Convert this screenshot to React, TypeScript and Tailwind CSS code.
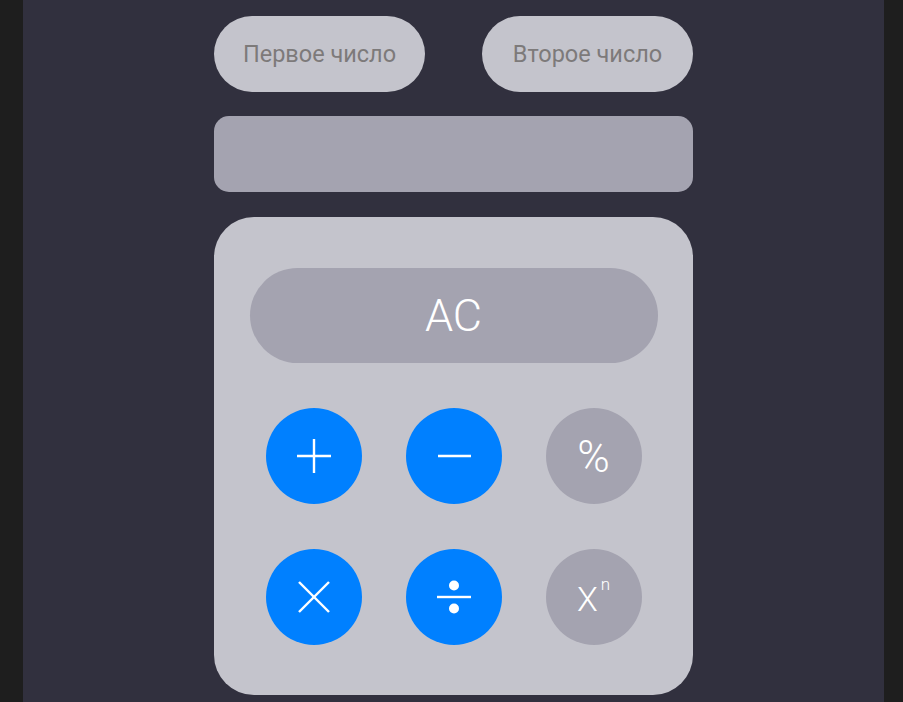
import React from "react";

function CircleButton({ blue, children }: { blue?: boolean; children: React.ReactNode }) {
  return (
    <button
      className={
        "w-[96px] h-[96px] rounded-full flex items-center justify-center text-white " +
        (blue ? "bg-[#0080ff]" : "bg-[#a4a3b0]")
      }
    >
      {children}
    </button>
  );
}

export default function App() {
  return (
    <div className="h-[702px] w-full bg-[#1e1e1e] pl-[23px] pr-[19px] overflow-hidden" style={{ fontFamily: "Roboto, 'Noto Sans', sans-serif" }}>
      <div className="h-full bg-[#31303e] flex flex-col items-center pt-[16px]">
        <div className="w-[479px] flex justify-between">
          <input
            placeholder="Первое число"
            className="w-[211px] h-[76px] rounded-full bg-[#c4c4cc] text-center text-[23.5px] text-[#7d7a7a] placeholder:text-[#7d7a7a] outline-none"
          />
          <input
            placeholder="Второе число"
            className="w-[211px] h-[76px] rounded-full bg-[#c4c4cc] text-center text-[23.5px] text-[#7d7a7a] placeholder:text-[#7d7a7a] outline-none"
          />
        </div>
        <div className="w-[479px] h-[76px] mt-[24px] rounded-[15px] bg-[#a4a3b0]" />
        <div className="w-[479px] h-[478px] mt-[25px] rounded-[40px] bg-[#c4c4cc] flex flex-col items-center pt-[51px]">
          <button className="w-[408px] h-[95px] rounded-full bg-[#a4a3b0] text-white text-[45px] font-light">AC</button>
          <div className="grid grid-cols-3 gap-x-[44px] gap-y-[45px] mt-[45px]">
            <CircleButton blue>
              <svg width="36" height="36" viewBox="0 0 36 36" stroke="white" strokeWidth="2.4">
                <line x1="1" y1="18" x2="35" y2="18" />
                <line x1="18" y1="1" x2="18" y2="35" />
              </svg>
            </CircleButton>
            <CircleButton blue>
              <svg width="36" height="36" viewBox="0 0 36 36" stroke="white" strokeWidth="2.4">
                <line x1="2" y1="18" x2="35" y2="18" />
              </svg>
            </CircleButton>
            <CircleButton>
              <span className="text-[44px] font-light leading-none relative top-[1px]">%</span>
            </CircleButton>
            <CircleButton blue>
              <svg width="36" height="36" viewBox="0 0 36 36" stroke="white" strokeWidth="2.4">
                <line x1="3" y1="3" x2="33" y2="33" />
                <line x1="33" y1="3" x2="3" y2="33" />
              </svg>
            </CircleButton>
            <CircleButton blue>
              <svg width="36" height="36" viewBox="0 0 36 36" fill="white">
                <circle cx="18" cy="6.5" r="5" />
                <rect x="1" y="16.8" width="34" height="2.4" />
                <circle cx="18" cy="29.5" r="5" />
              </svg>
            </CircleButton>
            <CircleButton>
              <span className="flex items-start leading-none relative top-[2px]">
                <span className="text-[34px] font-light">X</span>
                <span className="text-[17px] font-light ml-[3px] -mt-[6px]">n</span>
              </span>
            </CircleButton>
          </div>
        </div>
      </div>
    </div>
  );
}
